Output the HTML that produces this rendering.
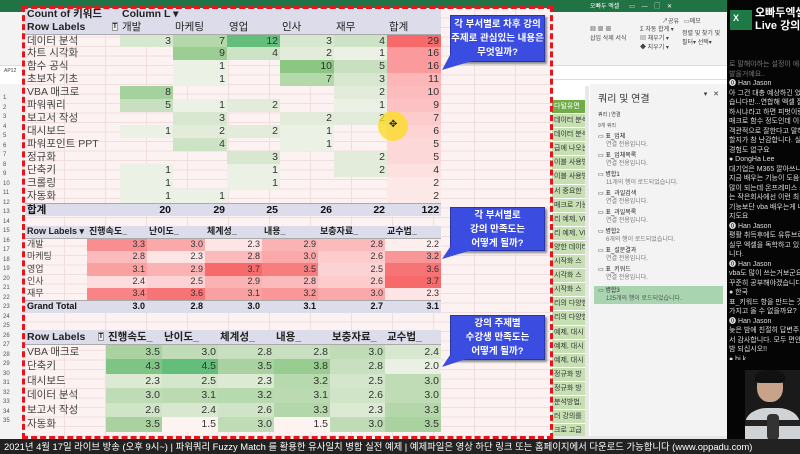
<!DOCTYPE html>
<html><head><meta charset="utf-8"><style>
*{margin:0;padding:0;box-sizing:border-box}
body{width:800px;height:454px;overflow:hidden;background:#fff;position:relative;font-family:"Liberation Sans","Noto Sans CJK KR",sans-serif;}
.a{position:absolute}
table{border-collapse:collapse;table-layout:fixed;position:absolute}
td{overflow:hidden;white-space:nowrap;padding:0 2px;text-align:right;color:#333;line-height:1;vertical-align:middle}
td.l{text-align:left;color:#444}
.h td{background:#dcdcea;font-weight:bold;color:#222;text-align:left}
.t td{background:#dcdcea;font-weight:bold;color:#111}
.t1 td{height:13px}
.t2 td{height:12.4px}
.t3 td{height:14.5px}
.call{position:absolute;background:#3b4ce0;color:#fff;font-weight:bold;font-size:9.5px;text-align:center;line-height:14px;border:1px solid #2a36a8;box-shadow:2px 2px 2px #888;white-space:nowrap}
.chat{color:#ddd;font-size:7px;line-height:9.5px;white-space:nowrap}
.q{font-size:6px;color:#333;line-height:8px;margin:3px 0 0 8px}
.q b{font-weight:normal;color:#222}
.q span{color:#777;margin-left:8px;display:block}
.gc div{height:14.1px;border-bottom:1px solid #fff;background:#c6e0b4;font-size:7px;padding-left:2px;color:#333;white-space:nowrap;overflow:hidden;line-height:13px}
</style></head><body>
<div class="a" style="left:0;top:0;width:727px;height:12px;background:#217346"></div>
<div class="a" style="left:590px;top:1px;font-size:6px;color:#fff">오빠두 엑셀 &nbsp;&nbsp;&nbsp;&nbsp; ▭ &nbsp;&nbsp; — &nbsp;&nbsp; ▢ &nbsp;&nbsp; ✕</div>
<div class="a" style="left:0;top:12px;width:727px;height:54px;background:#f3f3f3;border-bottom:1px solid #ddd"></div>
<div class="a" style="left:552px;top:66px;width:175px;height:14px;background:#fff;border-bottom:1px solid #ddd"></div>
<div class="a" style="left:590px;top:26px;font-size:6px;color:#444;line-height:9px">▦ ▦ ▦<br>삽입 삭제 서식</div>
<div class="a" style="left:640px;top:26px;font-size:6px;color:#444;line-height:9px">Σ 자동 합계 ▾<br>▤ 채우기 ▾<br>◆ 지우기 ▾</div>
<div class="a" style="left:682px;top:30px;font-size:6px;color:#444;line-height:9px">정렬 및 찾기 및<br>필터▾ 선택▾</div>
<div class="a" style="left:662px;top:16px;font-size:6px;color:#444">↗공유 &nbsp; ▭메모</div>
<div class="a" style="left:4px;top:68px;width:18px;height:10px;background:#fff;font-size:5px;color:#444">AP12</div>
<div class="a" style="left:0;top:84px;width:23px;height:356px;background:#f3f3f3;font-size:6px;color:#555;line-height:9.5px;padding-top:10px;overflow:hidden">
<div style="padding-left:3px">1<br>2<br>3<br>4<br>5<br>6<br>7<br>8<br>9<br>10<br>11<br>12<br>13<br>14<br>15<br>16<br>17<br>18<br>19<br>20<br>21<br>22<br>23<br>24<br>25<br>26<br>27<br>28<br>29<br>30<br>31<br>32<br>33<br>34<br>35</div></div>
<div class="a" style="left:552px;top:84px;width:36px;height:352px;background:#fff"></div>
<div class="a gc" style="left:552px;top:100px;width:33px;height:336px;overflow:hidden">
<div style="background:#70ad47;color:#fff">다털유면</div><div>데이터 분석</div><div>데이터 분석</div><div>급에 나오는</div><div>이블 사용방</div><div>이블 사용방</div><div>서 중요한</div><div>매크로 기능</div><div>리 예제, VB</div><div>리 예제, VB</div><div>양한 데이터</div><div>시작화 스</div><div>시각화 스</div><div>시작화 스</div><div>리의 다양한</div><div>리의 다양한</div><div>예제, 대시</div><div>예제, 대시</div><div>예제, 대시</div><div>정규화 방</div><div>정규화 방</div><div>분석방법,</div><div>러 강의를</div><div>크로 고급</div><div>인트, 차트</div></div>
<div class="a" style="left:585px;top:86px;width:4px;height:350px;background:#e8e8e8"></div>
<div class="a" style="left:590px;top:84px;width:137px;height:352px;background:#f3f3f3">
<div style="font-size:10px;color:#333;margin:6px 0 0 8px">쿼리 및 연결 <span style="float:right;margin-right:8px;font-size:7px">▾ &nbsp; ✕</span></div>
<div style="font-size:5px;color:#333;margin:6px 0 0 8px">쿼리 | 연결</div>
<div style="font-size:5px;color:#555;margin:4px 0 4px 8px">9개 쿼리</div>
<div class="q"><b>▭ 표_업체</b><span>연결 전용입니다.</span></div>
<div class="q"><b>▭ 표_업체목록</b><span>연결 전용입니다.</span></div>
<div class="q"><b>▭ 병합1</b><span>11개의 행이 로드되었습니다.</span></div>
<div class="q"><b>▭ 표_과일검색</b><span>연결 전용입니다.</span></div>
<div class="q"><b>▭ 표_과일목록</b><span>연결 전용입니다.</span></div>
<div class="q"><b>▭ 병합2</b><span>6개의 행이 로드되었습니다.</span></div>
<div class="q"><b>▭ 표_설문결과</b><span>연결 전용입니다.</span></div>
<div class="q"><b>▭ 표_키워드</b><span>연결 전용입니다.</span></div>
<div style="margin:4px 4px 0 4px;background:#a9d4b0;height:18px;font-size:6px;line-height:8px;padding:1px 4px;color:#333">▭ 병합3<br><span style="margin-left:8px;color:#555">125개의 행이 로드되었습니다.</span></div>
</div>
<div class="a" style="left:552px;top:436px;width:175px;height:4px;background:#e6e6e6"></div>
<div class="a" style="left:23px;top:8px;width:528px;height:430px;background:#fdf2f2;background-image:linear-gradient(#f0dddd 1px,transparent 1px),linear-gradient(90deg,#f0dddd 1px,transparent 1px);background-size:41px 9.5px"></div>
<!-- Table 1 -->
<table class="t1" style="left:25px;top:8px;width:416px;font-size:10.5px;">
<colgroup><col style="width:95px"><col style="width:53px"><col style="width:54px"><col style="width:53px"><col style="width:54px"><col style="width:53px"><col style="width:54px"></colgroup>
<tr class="h"><td>Count of 키워드</td><td colspan="6">Column L ▾</td></tr>
<tr class="h" style="border-bottom:1px solid #aaa"><td>Row Labels <span style="float:right;font-size:7px;border:1px solid #999;background:#eee">T</span></td><td style="font-weight:normal">개발</td><td style="font-weight:normal">마케팅</td><td style="font-weight:normal">영업</td><td style="font-weight:normal">인사</td><td style="font-weight:normal">재무</td><td style="font-weight:normal">합계</td></tr>
<tr><td class="l">데이터 분석</td><td style="background:#d8e8d0">3</td><td style="background:#b3d8aa">7</td><td style="background:#63be7b">12</td><td style="background:#d8e8d0">3</td><td style="background:#cde3c5">4</td><td style="background:#f8696b">29</td></tr>
<tr><td class="l">차트 시각화</td><td></td><td style="background:#9ccd92">9</td><td style="background:#cde3c5">4</td><td style="background:#e3ecdb">2</td><td style="background:#ecf1e6">1</td><td style="background:#fb9a9c">16</td></tr>
<tr><td class="l">함수 공식</td><td></td><td style="background:#ecf1e6">1</td><td></td><td style="background:#8bc683">10</td><td style="background:#c8e0bf">5</td><td style="background:#fb9a9c">16</td></tr>
<tr><td class="l">초보자 기초</td><td></td><td style="background:#ecf1e6">1</td><td></td><td style="background:#b3d8aa">7</td><td style="background:#d8e8d0">3</td><td style="background:#fcb6b8">11</td></tr>
<tr><td class="l">VBA 매크로</td><td style="background:#a5d29c">8</td><td></td><td></td><td></td><td style="background:#e3ecdb">2</td><td style="background:#fcbcbe">10</td></tr>
<tr><td class="l">파워쿼리</td><td style="background:#c8e0bf">5</td><td style="background:#ecf1e6">1</td><td style="background:#e3ecdb">2</td><td></td><td style="background:#ecf1e6">1</td><td style="background:#fcc2c3">9</td></tr>
<tr><td class="l">보고서 작성</td><td></td><td style="background:#d8e8d0">3</td><td></td><td style="background:#e3ecdb">2</td><td style="background:#e3ecdb">2</td><td style="background:#fccbcc">7</td></tr>
<tr><td class="l">대시보드</td><td style="background:#ecf1e6">1</td><td style="background:#e3ecdb">2</td><td style="background:#e3ecdb">2</td><td style="background:#ecf1e6">1</td><td></td><td style="background:#fdd3d4">6</td></tr>
<tr><td class="l">파워포인트 PPT</td><td></td><td style="background:#cde3c5">4</td><td></td><td style="background:#ecf1e6">1</td><td></td><td style="background:#fdd8d9">5</td></tr>
<tr><td class="l">정규화</td><td></td><td></td><td style="background:#d8e8d0">3</td><td></td><td style="background:#e3ecdb">2</td><td style="background:#fdd8d9">5</td></tr>
<tr><td class="l">단축키</td><td style="background:#ecf1e6">1</td><td></td><td style="background:#ecf1e6">1</td><td></td><td style="background:#e3ecdb">2</td><td style="background:#fde0e0">4</td></tr>
<tr><td class="l">크롤링</td><td style="background:#ecf1e6">1</td><td></td><td style="background:#ecf1e6">1</td><td></td><td></td><td style="background:#fde8e8">2</td></tr>
<tr><td class="l">자동화</td><td style="background:#ecf1e6">1</td><td style="background:#ecf1e6">1</td><td></td><td></td><td></td><td style="background:#fde8e8">2</td></tr>
<tr class="t" style="border-top:1px solid #aaa"><td class="l" style="color:#111">합계</td><td>20</td><td>29</td><td>25</td><td>26</td><td>22</td><td>122</td></tr>
</table>
<!-- Table 2 -->
<table class="t2" style="left:25px;top:226px;width:416px;font-size:9px;">
<colgroup><col style="width:62px"><col style="width:60px"><col style="width:58px"><col style="width:57px"><col style="width:56px"><col style="width:67px"><col style="width:56px"></colgroup>
<tr class="h" style="border-bottom:1px solid #aaa"><td>Row Labels ▾</td><td>진행속도_</td><td>난이도_</td><td>체계성_</td><td>내용_</td><td>보충자료_</td><td>교수법_</td></tr>
<tr><td class="l">개발</td><td style="background:#f88e90">3.3</td><td style="background:#faa8aa">3.0</td><td style="background:#fde5e5">2.3</td><td style="background:#fab2b3">2.9</td><td style="background:#fbbabb">2.8</td><td style="background:#fdeeee">2.2</td></tr>
<tr><td class="l">마케팅</td><td style="background:#fbbabb">2.8</td><td style="background:#fde5e5">2.3</td><td style="background:#fbbabb">2.8</td><td style="background:#faa8aa">3.0</td><td style="background:#fccbcc">2.6</td><td style="background:#f99698">3.2</td></tr>
<tr><td class="l">영업</td><td style="background:#f9a0a1">3.1</td><td style="background:#fab2b3">2.9</td><td style="background:#f66a6c">3.7</td><td style="background:#f77d7f">3.5</td><td style="background:#fcd3d4">2.5</td><td style="background:#f77476">3.6</td></tr>
<tr><td class="l">인사</td><td style="background:#fddcdd">2.4</td><td style="background:#fcd3d4">2.5</td><td style="background:#fab2b3">2.9</td><td style="background:#fbbabb">2.8</td><td style="background:#fccbcc">2.6</td><td style="background:#f66a6c">3.7</td></tr>
<tr><td class="l">재무</td><td style="background:#f88486">3.4</td><td style="background:#f77476">3.6</td><td style="background:#f9a0a1">3.1</td><td style="background:#f99698">3.2</td><td style="background:#faa8aa">3.0</td><td style="background:#fde5e5">2.3</td></tr>
<tr class="t" style="border-top:1px solid #aaa"><td class="l" style="color:#111">Grand Total</td><td>3.0</td><td>2.8</td><td>3.0</td><td>3.1</td><td>2.7</td><td>3.1</td></tr>
</table>
<!-- Table 3 -->
<table class="t3" style="left:25px;top:330px;width:416px;font-size:10.5px;">
<colgroup><col style="width:81px"><col style="width:56px"><col style="width:56px"><col style="width:56px"><col style="width:56px"><col style="width:55px"><col style="width:56px"></colgroup>
<tr class="h" style="border-bottom:1px solid #aaa"><td>Row Labels <span style="float:right;font-size:7px;border:1px solid #999;background:#eee">T</span></td><td>진행속도_</td><td>난이도_</td><td>체계성_</td><td>내용_</td><td>보충자료_</td><td>교수법_</td></tr>
<tr><td class="l">VBA 매크로</td><td style="background:#a9d2a0">3.5</td><td style="background:#bfdcb6">3.0</td><td style="background:#c8e0bf">2.8</td><td style="background:#c8e0bf">2.8</td><td style="background:#bfdcb6">3.0</td><td style="background:#d8e8d0">2.4</td></tr>
<tr><td class="l">단축키</td><td style="background:#7ec484">4.3</td><td style="background:#63be7b">4.5</td><td style="background:#a9d2a0">3.5</td><td style="background:#99cc90">3.8</td><td style="background:#c8e0bf">2.8</td><td style="background:#eaf0e4">2.0</td></tr>
<tr><td class="l">대시보드</td><td style="background:#dcead4">2.3</td><td style="background:#d4e6cc">2.5</td><td style="background:#dcead4">2.3</td><td style="background:#b7d9ae">3.2</td><td style="background:#d4e6cc">2.5</td><td style="background:#bfdcb6">3.0</td></tr>
<tr><td class="l">데이터 분석</td><td style="background:#bfdcb6">3.0</td><td style="background:#bbdab2">3.1</td><td style="background:#b7d9ae">3.2</td><td style="background:#bbdab2">3.1</td><td style="background:#d0e4c8">2.6</td><td style="background:#bfdcb6">3.0</td></tr>
<tr><td class="l">보고서 작성</td><td style="background:#d0e4c8">2.6</td><td style="background:#d8e8d0">2.4</td><td style="background:#d0e4c8">2.6</td><td style="background:#b3d7aa">3.3</td><td style="background:#dcead4">2.3</td><td style="background:#b3d7aa">3.3</td></tr>
<tr><td class="l">자동화</td><td style="background:#a9d2a0">3.5</td><td style="background:#fdf4f2">1.5</td><td style="background:#bfdcb6">3.0</td><td style="background:#fdf4f2">1.5</td><td style="background:#bfdcb6">3.0</td><td style="background:#a9d2a0">3.5</td></tr>
</table>
<div class="a" style="left:378px;top:111px;width:30px;height:30px;border-radius:50%;background:rgba(250,220,40,0.8)"></div>
<div class="a" style="left:389px;top:119px;font-size:10px;color:#222">✥</div>
<div class="call" style="left:450px;top:15px;width:95px;height:47px;padding-top:2px">각 부서별로 차후 강의<br>주제로 관심있는 내용은<br>무엇일까?</div>
<div class="call" style="left:450px;top:207px;width:95px;height:44px;padding-top:1px">각 부서별로<br>강의 만족도는<br>어떻게 될까?</div>
<div class="call" style="left:450px;top:315px;width:95px;height:45px;padding-top:1px">강의 주제별<br>수강생 만족도는<br>어떻게 될까?</div>
<svg class="a" style="left:440px;top:55px" width="40" height="320"><polygon points="10,0 32,6 2,15" fill="#3b4ce0"/><polygon points="10,192 32,195 2,204" fill="#3b4ce0"/><polygon points="10,300 32,302 2,312" fill="#3b4ce0"/></svg>
<div class="a" style="left:22px;top:6px;width:531px;height:433px;border:3px dashed #e8141b"></div>
<div class="a" style="left:727px;top:0;width:73px;height:440px;background:#050505"></div>
<div class="a" style="left:730px;top:10px;width:22px;height:20px;background:#1d7a45"></div>
<div class="a" style="left:733px;top:13px;font-size:9px;color:#fff;font-weight:bold">X</div>
<div class="a" style="left:755px;top:7px;font-size:11px;color:#fff;font-weight:bold;line-height:13px;white-space:nowrap">오빠두엑셀<br>Live 강의</div>
<div class="a chat" style="left:729px;top:60px;width:71px;height:300px;overflow:hidden">
<span style="color:#777">로 말해야하는 설정이 에우</span><br><span style="color:#777">발을거예요..</span><br>⓿ Han Jason<br>아 그건 대충 예상하긴 었었<br>습니다만...연합해 엑셀 잘<br>하시냐라고 하면 피벗이랑<br>매크로 함수 정도인데 이걸<br>객관적으로 잘한다고 말해야<br>할지가 참 난감합니다. 실무<br>경험도 없구요<br>● DongHa Lee<br>대기업은 M365 깔아쓰니께<br>지금 배우는 기능이 도움이<br>많이 되는데 온프레미스 쓰<br>는 작은회사에선 이런 최신<br>기능보단 vba 배우는게 나을<br>지도요<br>⓿ Han Jason<br>평활 취득후에도 유튜브로<br>실무 엑셀을 독학하고 있습<br>니다.<br>⓿ Han Jason<br>vba도 많이 쓰는거보군요.<br>꾸준히 공부해야겠습니다.<br>● 한국<br>표_키워드 항을 만드는 것도<br>가지고 올 수 없을까요?<br>⓿ Han Jason<br>늦은 밤에 친절히 답변주셔<br>서 감사합니다. 모두 편안한<br>밤 되십시오!!<br>● hj k<br>요구도조사..</div>
<div class="a" style="left:745px;top:370px;width:55px;height:70px;background:#1a1a1a;overflow:hidden">
<div class="a" style="left:12px;top:2px;width:26px;height:30px;border-radius:45%;background:#c9a28a"></div>
<div class="a" style="left:10px;top:0;width:30px;height:13px;border-radius:50% 50% 20% 20%;background:#111"></div>
<div class="a" style="left:0;top:38px;width:55px;height:40px;border-radius:40% 40% 0 0;background:#cfd3d6"></div>
<div class="a" style="left:0;top:50px;width:55px;height:6px;background:#222"></div>
<div class="a" style="left:22px;top:44px;width:12px;height:26px;background:#333;border-radius:4px"></div>
</div>
<div class="a" style="left:0;top:439px;width:800px;height:15px;background:#222;color:#fff;font-size:9.4px;line-height:15px;padding-left:4px;white-space:nowrap;overflow:hidden">2021년 4월 17일 라이브 방송 (오후 9시~) | 파워쿼리 Fuzzy Match 를 활용한 유사일치 병합 실전 예제 | 예제파일은 영상 하단 링크 또는 홈페이지에서 다운로드 가능합니다 (www.oppadu.com)</div>
</body></html>
